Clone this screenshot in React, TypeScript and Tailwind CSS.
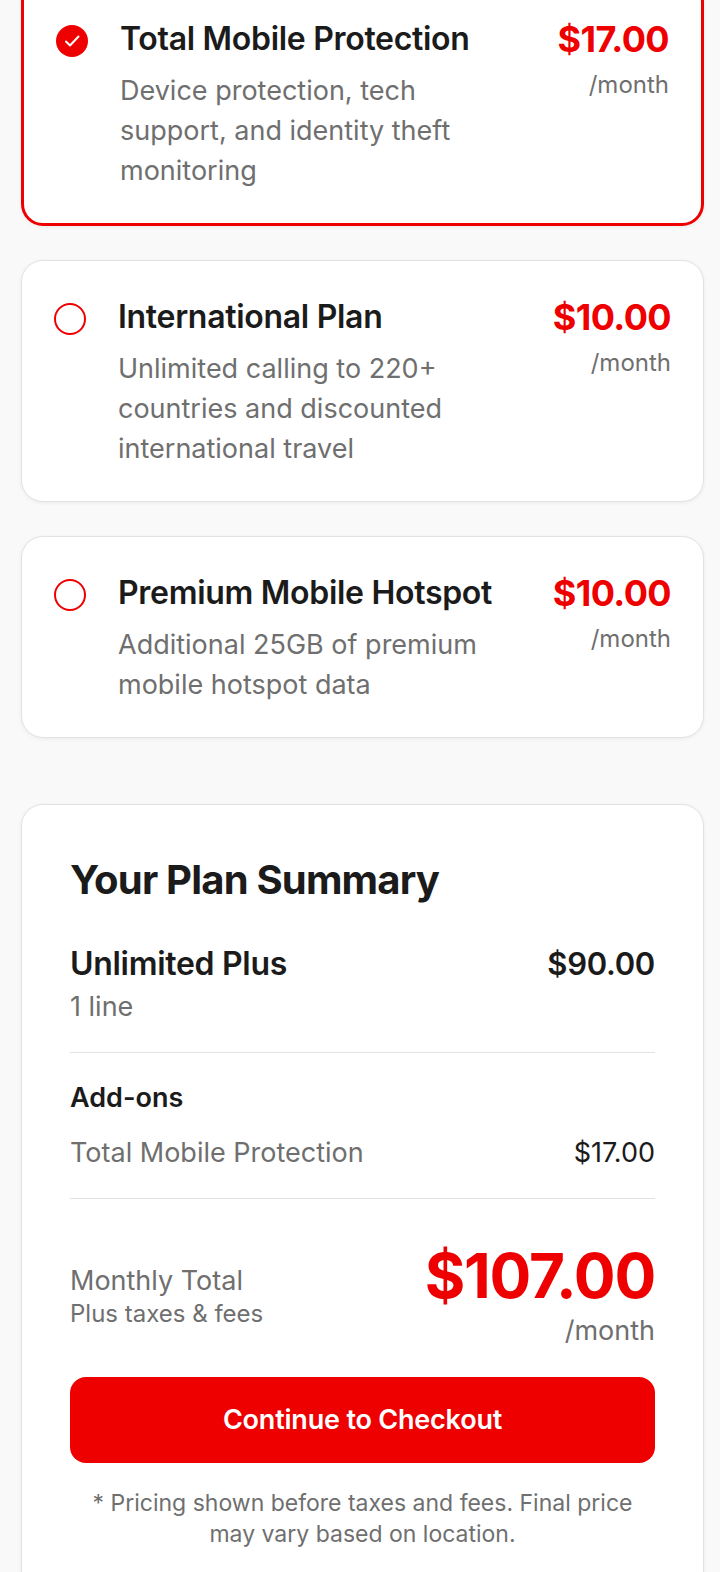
import React from 'react';

const RED = '#EE0000';

interface AddOn {
    id: string;
    name: string;
    description: string;
    price: string;
}

const ADD_ONS: AddOn[] = [
    { id: 'tmp', name: 'Total Mobile Protection', description: 'Device protection, tech support, and identity theft monitoring', price: '$17.00' },
    { id: 'intl', name: 'International Plan', description: 'Unlimited calling to 220+ countries and discounted international travel', price: '$10.00' },
    { id: 'hotspot', name: 'Premium Mobile Hotspot', description: 'Additional 25GB of premium mobile hotspot data', price: '$10.00' },
];

function Radio({ checked }: { checked: boolean }) {
    if (checked) {
        return (
            <div className="mt-[10px] w-8 h-8 shrink-0 rounded-full bg-[#EE0000] flex items-center justify-center">
                <svg width="24" height="24" viewBox="0 0 24 24" fill="none" stroke="white" strokeWidth="2" strokeLinecap="round" strokeLinejoin="round">
                    <path d="M6 12.5l4 4L18.5 7.5" />
                </svg>
            </div>
        );
    }
    return <div className="mt-[10px] w-8 h-8 shrink-0 rounded-full border-2 border-[#EE0000] bg-white" />;
}

function AddOnCard({ addOn, selected }: { addOn: AddOn; selected: boolean }) {
    return (
        <div
            className={`bg-white rounded-[22px] p-8 flex items-start shadow-[0_1px_4px_rgba(0,0,0,0.06)] ${
                selected ? 'border-[3px] border-[#EE0000]' : 'border border-[#e2e2e2]'
            }`}
        >
            <Radio checked={selected} />
            <div className="flex-1 ml-8 mr-6">
                <h3 className="text-[32px] leading-[48px] font-semibold text-[#1b1b1b] tracking-[-0.3px]">{addOn.name}</h3>
                <p className="mt-2 max-w-[385px] text-[27px] leading-[40px] text-[#6f6f6f]">{addOn.description}</p>
            </div>
            <div className="flex flex-col items-end shrink-0">
                <span className="text-[36px] leading-[48px] font-bold text-[#EE0000] tracking-[-0.6px]">{addOn.price}</span>
                <span className="mt-2 text-[24px] leading-[28px] text-[#6f6f6f]">/month</span>
            </div>
        </div>
    );
}

export default function App() {
    const selectedId = 'tmp';

    return (
        <div className="min-h-screen bg-[#f9f9f9] overflow-hidden" style={{ fontFamily: 'Inter, "Noto Sans", sans-serif' }}>
            <div className="ml-[21px] w-[683px] -mt-[20px] pb-10">
                {/* ADD-ON OPTIONS */}
                <div className="flex flex-col gap-[34px]">
                    {ADD_ONS.map(a => (
                        <AddOnCard key={a.id} addOn={a} selected={a.id === selectedId} />
                    ))}
                </div>

                {/* PLAN SUMMARY */}
                <div className="mt-[66px] bg-white border border-[#e2e2e2] rounded-[22px] px-12 pt-12 pb-12 shadow-[0_1px_4px_rgba(0,0,0,0.06)]">
                    <h2 className="text-[40px] leading-[54px] font-bold text-[#1b1b1b] tracking-[-0.8px]">Your Plan Summary</h2>

                    <div className="mt-[36px]">
                        <div className="flex justify-between items-center">
                            <span className="text-[32px] leading-[42px] font-semibold text-[#1b1b1b] tracking-[-0.3px]">Unlimited Plus</span>
                            <span className="text-[31px] leading-[42px] font-semibold text-[#1b1b1b] tracking-[-0.3px]">$90.00</span>
                        </div>
                        <p className="mt-1 text-[27px] leading-[36px] text-[#6f6f6f]">1 line</p>
                    </div>

                    <div className="mt-[27px] border-t border-[#e2e2e2]" />

                    <p className="mt-[27px] text-[27px] leading-[36px] font-semibold text-[#1b1b1b]">Add-ons</p>
                    <div className="mt-[19px] flex justify-between items-center">
                        <span className="text-[27px] leading-[36px] text-[#6f6f6f]">Total Mobile Protection</span>
                        <span className="text-[27px] leading-[36px] text-[#1b1b1b]">$17.00</span>
                    </div>

                    <div className="mt-[27px] border-t border-[#e2e2e2]" />

                    <div className="mt-[43px] flex justify-between items-center">
                        <div>
                            <p className="text-[27px] leading-[36px] text-[#6f6f6f]">Monthly Total</p>
                            <p className="text-[24px] leading-[30px] text-[#6f6f6f]">Plus taxes &amp; fees</p>
                        </div>
                        <div className="flex flex-col items-end">
                            <span className="text-[62px] leading-[67px] font-bold text-[#EE0000] tracking-[-1.2px]">$107.00</span>
                            <span className="mt-1 text-[27px] leading-[36px] text-[#6f6f6f]">/month</span>
                        </div>
                    </div>

                    <button
                        className="mt-[28px] w-full h-[86px] rounded-[16px] text-white text-[27px] font-semibold tracking-[-0.2px]"
                        style={{ backgroundColor: RED }}
                    >
                        Continue to Checkout
                    </button>

                    <p className="mt-[25px] text-center text-[23px] leading-[31px] text-[#6f6f6f]">
                        * Pricing shown before taxes and fees. Final price may vary based on location.
                    </p>
                </div>
            </div>
        </div>
    );
}
